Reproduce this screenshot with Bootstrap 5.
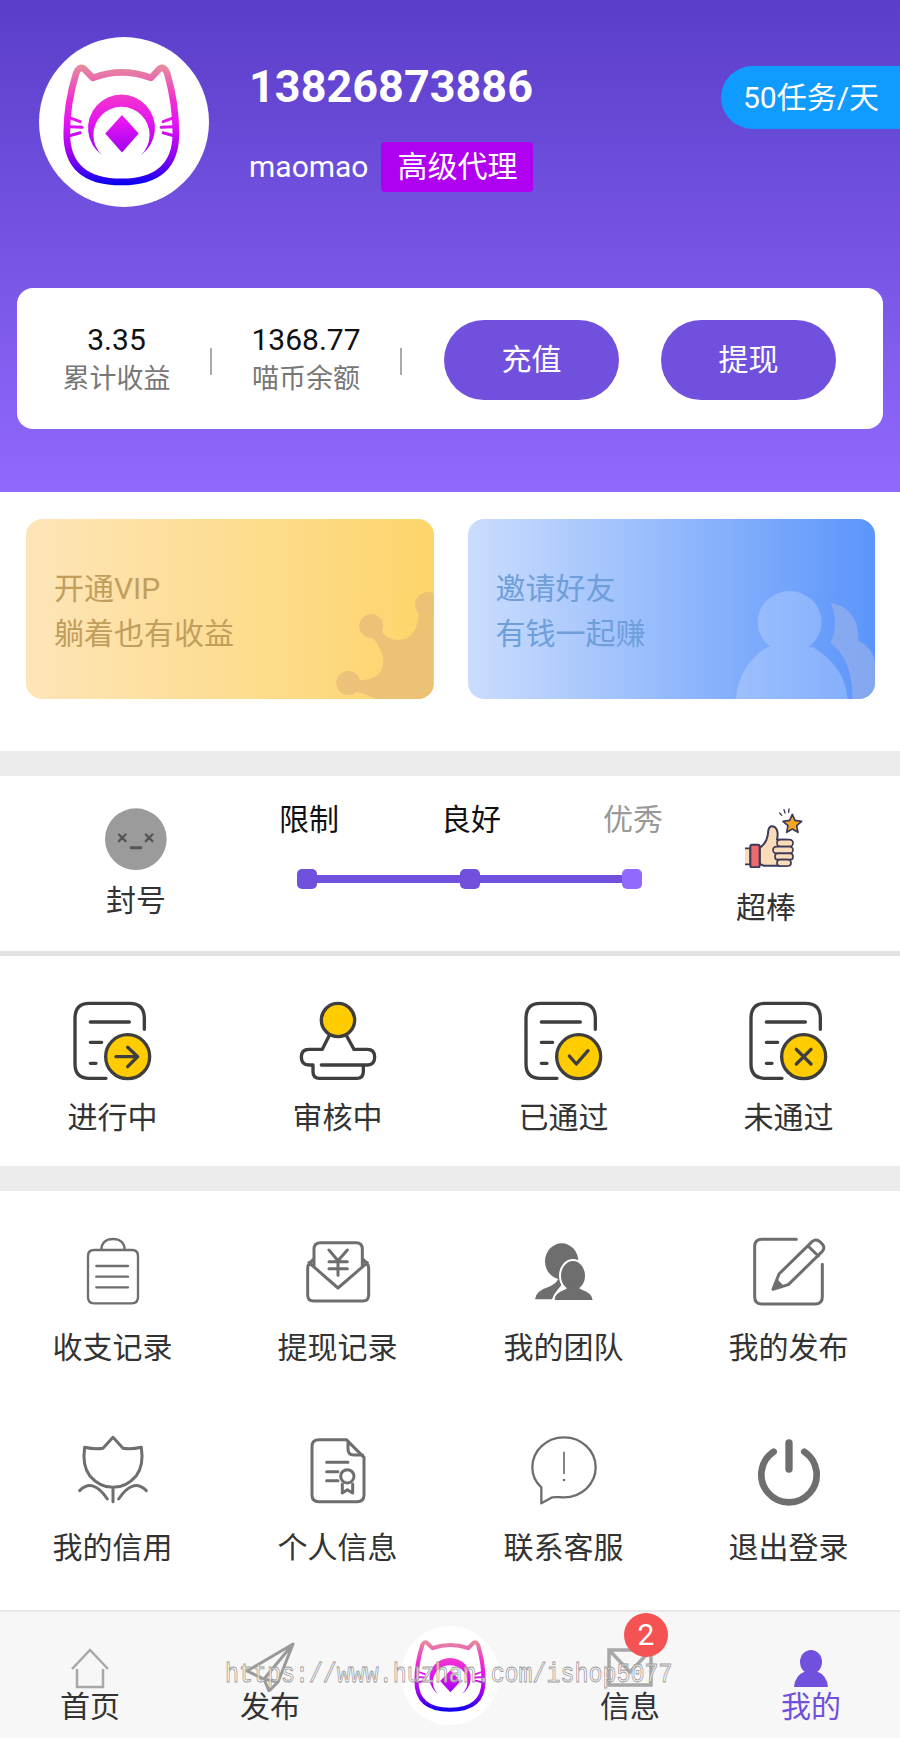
<!DOCTYPE html>
<html lang="zh-CN">

<head>
  <meta charset="UTF-8">
  <meta name="viewport" content="width=device-width, initial-scale=1.0">
  <title>我的</title>
  <link href="https://cdn.jsdelivr.net/npm/bootstrap@5.3.0/dist/css/bootstrap.min.css" rel="stylesheet">
  <style>
    body {
      width: 900px;
      height: 1738px;
      overflow: hidden;
      background: #fff;
      color: #333;
      font-family: Roboto, "Noto Sans CJK SC", sans-serif;
      font-size: 30px;
      line-height: 40px;
    }

    .hero {
      height: 492px;
      padding-top: 37px;
      background: linear-gradient(180deg, #5a3ec9 0%, #9169fd 100%);
    }

    .avatar {
      width: 170px;
      height: 170px;
      margin-left: 39px;
      margin-right: 40px;
      flex: none;
    }

    .phone {
      margin-top: 27px;
      font-size: 45px;
      line-height: 45px;
      font-weight: 700;
      color: #fff;
    }

    .name-row {
      margin-top: 33px;
      color: #fff;
    }

    .level-tag {
      margin-left: 13px;
      height: 50px;
      padding: 0 16px;
      line-height: 50px;
      border-radius: 4px;
      background: #b000f2;
      color: #fff;
    }

    .task-chip {
      margin-top: 29px;
      height: 63px;
      width: 179px;
      padding-left: 22px;
      line-height: 63px;
      border-radius: 32px 0 0 32px;
      background: #0f9bff;
      color: #fff;
    }

    .stats-panel {
      margin: 81px 17px 0;
      height: 141px;
      border-radius: 16px;
      background: #fff;
    }

    .stat-first {
      width: 193px;
      padding-left: 6px;
    }

    .stat-second {
      width: 188px;
    }

    .stat-value {
      color: #111;
    }

    .stat-label {
      font-size: 27px;
      line-height: 38px;
      color: #777;
    }

    .stat-sep {
      width: 2px;
      height: 27px;
      margin-top: 6px;
      background: #aaa;
    }

    .btn-money {
      width: 175px;
      height: 80px;
      margin-top: 2px;
      border: 0;
      border-radius: 40px;
      background: #7050dd;
      color: #fff;
      font-size: 30px;
      line-height: 80px;
      padding: 0;
    }

    .btn-money:first-of-type {
      margin-left: 42px;
      margin-right: 42px;
    }

    .banners {
      height: 259px;
      padding: 27px 25px 0 26px;
      gap: 34px;
    }

    .banner {
      flex: 1;
      height: 180px;
      padding: 47px 0 0 28px;
      border-radius: 16px;
      overflow: hidden;
      line-height: 45px;
    }

    .banner-vip {
      background: linear-gradient(90deg, #fde5b9 0%, #fdd56a 100%);
      color: #c29e5c;
    }

    .banner-invite {
      background: linear-gradient(90deg, #cbddfd 0%, #5b95fb 100%);
      color: #6e9fdb;
    }

    .banner-art {
      top: 0;
      left: 0;
      width: 100%;
      height: 100%;
    }

    .gap-band {
      height: 25px;
      background: #ececec;
    }

    .credit {
      height: 175px;
    }

    .credit-side {
      width: 228px;
      padding: 32px 0 0 44px;
    }

    .credit-side svg {
      display: block;
      margin: 0 auto 11px;
    }

    .credit-end {
      width: 104px;
      padding-top: 32px;
    }

    .credit-end svg {
      display: block;
      margin: 0 0 20px 29px;
    }

    .credit-mid {
      width: 486px;
      padding-top: 24px;
    }

    .credit-mid span {
      width: 162px;
      color: #111;
    }

    .credit-mid span.is-off {
      color: #999;
    }

    .credit-track {
      width: 345px;
      margin: 29px 0 0 69px;
    }

    .track-dot {
      width: 20px;
      height: 20px;
      border-radius: 5px;
      background: #7050dd;
      flex: none;
    }

    .track-dot.is-end {
      background: #9169fd;
    }

    .track-line {
      height: 8px;
      background: #7050dd;
    }

    .thin-band {
      height: 5px;
      background: #e3e3e3;
    }

    .task-row {
      height: 210px;
      padding-top: 45px;
    }

    .task-row .icon-box {
      margin-bottom: 17px;
    }

    .task-row .col-3:nth-child(n+3),
    .tool-grid .col-3:nth-child(4n+3),
    .tool-grid .col-3:nth-child(4n) {
      padding-left: 2px;
    }

    .tool-grid {
      height: 419px;
      padding-top: 40px;
      row-gap: 61px;
    }

    .icon-box {
      display: block;
      width: 80px;
      height: 80px;
      margin: 0 auto 16px;
    }

    .tool-grid .icon-box {
      margin-bottom: 17px;
    }

    .tool-grid .col-3:nth-child(n+5) .icon-box {
      margin-bottom: 19px;
    }

    .tabbar {
      height: 128px;
      background: #f7f7f7;
      border-top: 2px solid #e8e8e8;
    }

    .tab-item {
      width: 180px;
      padding-top: 30px;
      line-height: 30px;
    }

    .tab-item svg {
      display: block;
      margin: 0 auto;
    }

    .tab-item.is-on {
      color: #7050dd;
      padding-left: 2px;
    }

    .tab-logo {
      width: 98px;
      height: 99px;
      margin: 14px auto 0;
      padding: 13px;
      border-radius: 50%;
      background: #fff;
    }

    .msg-count {
      top: 1px;
      left: 84px;
      width: 44px;
      height: 44px;
      line-height: 44px;
      border-radius: 50%;
      background: #f55353;
      color: #fff;
    }

    .site-mark {
      left: 225px;
      top: 1660px;
      font-family: "Liberation Mono", monospace;
      font-size: 23.3px;
      line-height: 30px;
      white-space: nowrap;
      color: rgba(255, 255, 255, 0.7);
      -webkit-text-stroke: 0.7px #999;
      transform: scaleY(1.2);
    }

    .ink-doc {
      fill: none;
      stroke: #3e3e3e;
      stroke-width: 10;
      stroke-linecap: round;
      stroke-linejoin: round;
    }

    .ink-tool {
      fill: none;
      stroke: #6e6e6e;
      stroke-width: 9;
      stroke-linecap: round;
      stroke-linejoin: round;
    }
  </style>
</head>

<body>
  <svg width="0" height="0" class="position-absolute">
    <defs>
      <linearGradient id="catFill" gradientUnits="userSpaceOnUse" x1="0" y1="140" x2="0" y2="490">
        <stop offset="0" stop-color="#e58c9c" />
        <stop offset="0.28" stop-color="#f030d0" />
        <stop offset="0.48" stop-color="#e414f4" />
        <stop offset="0.75" stop-color="#9a00f0" />
        <stop offset="1" stop-color="#0c00f0" />
      </linearGradient>
      <symbol id="catLogo" viewBox="57 52 508 508">
        <path d="M190 146 L218 174 Q305 142 392 174 L418 146 Q432 140 440 160 Q466 250 466 340 Q466 485 303 485 Q140 485 140 340 Q140 250 168 160 Q176 140 190 146 Z" fill="none" stroke="url(#catFill)" stroke-width="20" stroke-linejoin="round" />
        <path d="M148 293 L180 305 M148 320 L186 322 M148 347 L180 338 M460 293 L428 305 M460 320 L422 322 M460 347 L428 338" stroke="url(#catFill)" stroke-width="9" stroke-linecap="round" fill="none" />
        <path d="M245 405 A100 100 0 1 1 362 405 A84 84 0 1 0 245 405 Z" fill="url(#catFill)" />
        <path d="M305 285 L355 340 L305 397 L255 340 Z" fill="url(#catFill)" />
      </symbol>
      <symbol id="docBase" viewBox="36 33 240 240">
        <path class="ink-doc" d="M135 265 H85 Q42 265 42 222 V85 Q42 40 85 40 H205 Q250 40 250 85 V118 M88 96 H205 M88 157 H122 M88 220 H105" />
        <circle class="ink-doc" cx="200" cy="200" r="66" style="fill:#ffcc00" />
      </symbol>
    </defs>
  </svg>

  <div class="hero">
    <div class="d-flex align-items-start">
      <svg class="avatar bg-white rounded-circle"><use href="#catLogo" /></svg>
      <div>
        <div class="phone">13826873886</div>
        <div class="name-row d-flex align-items-center">
          <span>maomao</span>
          <span class="level-tag">高级代理</span>
        </div>
      </div>
      <div class="task-chip ms-auto">50任务/天</div>
    </div>

    <div class="stats-panel d-flex align-items-center">
      <div class="stat-first text-center">
        <div class="stat-value">3.35</div>
        <div class="stat-label">累计收益</div>
      </div>
      <div class="stat-sep"></div>
      <div class="stat-second text-center">
        <div class="stat-value">1368.77</div>
        <div class="stat-label">喵币余额</div>
      </div>
      <div class="stat-sep"></div>
      <button type="button" class="btn btn-money">充值</button>
      <button type="button" class="btn btn-money">提现</button>
    </div>
  </div>

  <div class="banners d-flex">
    <div class="banner banner-vip position-relative">
      <svg class="banner-art position-absolute" viewBox="0 0 407 180">
        <g fill="#e8bd78" opacity="0.8">
          <path d="M407 76 L392 88 Q394 120 372 121 Q358 121 352 106 L338 110 Q354 124 357 140 Q358 160 336 161 L322 164 L328 172 Q340 175 350 180 H407 Z" />
          <circle cx="402" cy="86" r="13" />
          <circle cx="345" cy="107" r="12" />
          <circle cx="322" cy="164" r="12" />
        </g>
      </svg>
      <div class="position-relative">开通VIP<br>躺着也有收益</div>
    </div>
    <div class="banner banner-invite position-relative">
      <svg class="banner-art position-absolute" viewBox="0 0 408 180">
        <path d="M363 84 Q391 88 391 122 Q408 130 408 150 V180 H385 Q385 140 363 124 Q372 105 363 84 Z" fill="#a9b8e6" fill-opacity="0.5" />
        <g fill="#fff" opacity="0.22">
          <ellipse cx="322" cy="103" rx="32" ry="31" />
          <path d="M268 180 Q272 145 300 128 H345 Q378 148 380 180 Z" />
        </g>
      </svg>
      <div class="position-relative">邀请好友<br>有钱一起赚</div>
    </div>
  </div>

  <div class="gap-band"></div>

  <div class="credit d-flex">
    <div class="credit-side text-center">
      <svg width="62" height="62" viewBox="135 52 187 187">
        <circle cx="228" cy="146" r="93" fill="#9b9b9b" />
        <path d="M177 132 L197 152 M197 132 L177 152 M258 132 L278 152 M278 132 L258 152" stroke="#555" stroke-width="7" stroke-linecap="round" />
        <path d="M214 172 H243" stroke="#555" stroke-width="9" stroke-linecap="round" />
      </svg>
      封号
    </div>
    <div class="credit-mid">
      <div class="d-flex text-center">
        <span>限制</span>
        <span>良好</span>
        <span class="is-off">优秀</span>
      </div>
      <div class="credit-track d-flex align-items-center">
        <div class="track-dot"></div>
        <div class="track-line flex-fill"></div>
        <div class="track-dot"></div>
        <div class="track-line flex-fill"></div>
        <div class="track-dot is-end"></div>
      </div>
    </div>
    <div class="credit-end text-center">
      <svg width="60" height="60" viewBox="310 55 180 180">
        <path d="M316 176 H332 V224 H316" fill="#fbdcb8" stroke="#3c3a5c" stroke-width="5" />
        <path d="M360 174 Q384 160 386 122 Q390 104 405 112 Q418 122 412 150 H440 V228 H375 Q368 228 360 222 Z" fill="#fbdcb8" stroke="#3c3a5c" stroke-width="6" stroke-linejoin="round" />
        <rect x="332" y="165" width="28" height="68" rx="5" fill="#ef6a6a" stroke="#3c3a5c" stroke-width="6" />
        <rect x="412" y="150" width="48" height="21" rx="10" fill="#fbdcb8" stroke="#3c3a5c" stroke-width="5" />
        <rect x="400" y="171" width="60" height="20" rx="10" fill="#fbdcb8" stroke="#3c3a5c" stroke-width="5" />
        <rect x="406" y="191" width="54" height="19" rx="9" fill="#fbdcb8" stroke="#3c3a5c" stroke-width="5" />
        <rect x="412" y="210" width="42" height="19" rx="9" fill="#fbdcb8" stroke="#3c3a5c" stroke-width="5" />
        <path d="M458 74 L466 92 L486 95 L471 108 L475 128 L458 118 L441 128 L445 108 L430 95 L450 92 Z" fill="#f5a623" stroke="#3c3a5c" stroke-width="5" stroke-linejoin="round" />
        <path d="M420 70 L426 77 M433 60 L436 70 M448 58 L447 68" stroke="#3c3a5c" stroke-width="4" stroke-linecap="round" />
      </svg>
      超棒
    </div>
  </div>

  <div class="thin-band"></div>

  <div class="task-row row g-0 text-center">
    <div class="col-3">
      <svg class="icon-box" viewBox="36 33 240 240">
        <use href="#docBase" x="36" y="33" width="240" height="240" />
        <path class="ink-doc" d="M165 200 H228 M200 172 L230 200 L200 230" />
      </svg>
      进行中
    </div>
    <div class="col-3">
      <svg class="icon-box" viewBox="712 33 240 240">
        <path class="ink-doc" d="M805 138 L785 178 H745 Q722 178 722 201 Q722 225 745 225 H757 V245 Q757 265 777 265 H888 Q908 265 908 245 V225 H920 Q942 225 942 201 Q942 178 920 178 H880 L858 138 M782 225 H905" />
        <circle class="ink-doc" cx="832" cy="90" r="50" style="fill:#ffcc00" />
      </svg>
      审核中
    </div>
    <div class="col-3">
      <svg class="icon-box" viewBox="36 33 240 240">
        <use href="#docBase" x="36" y="33" width="240" height="240" />
        <path class="ink-doc" d="M172 198 L193 222 L228 182" />
      </svg>
      已通过
    </div>
    <div class="col-3">
      <svg class="icon-box" viewBox="36 33 240 240">
        <use href="#docBase" x="36" y="33" width="240" height="240" />
        <path class="ink-doc" d="M178 178 L222 222 M222 178 L178 222" />
      </svg>
      未通过
    </div>
  </div>

  <div class="gap-band"></div>

  <div class="tool-grid row g-0 text-center align-content-start">
    <div class="col-3">
      <svg class="icon-box" viewBox="35 33 240 240">
        <path class="ink-tool" style="stroke-width:7" d="M120 90 H98 Q80 90 80 108 V232 Q80 250 98 250 H212 Q230 250 230 232 V108 Q230 90 212 90 H190 M120 90 C120 68 135 57 155 57 C175 57 190 68 190 90 Z M105 138 H200 M105 170 H200 M105 202 H200" />
      </svg>
      收支记录
    </div>
    <div class="col-3">
      <svg class="icon-box" viewBox="712 33 240 240">
        <path class="ink-tool" d="M758 118 L746 130 Q741 135 741 146 V225 Q741 243 759 243 H906 Q924 243 924 225 V146 Q924 135 919 130 L907 118 M745 128 L832 204 L920 128 M760 138 V87 Q760 68 780 68 H886 Q905 68 905 87 V138" />
        <path class="ink-tool" d="M805 90 L832 122 L860 90 M832 122 V166 M805 125 H860 M805 146 H860" />
      </svg>
      提现记录
    </div>
    <div class="col-3">
      <svg class="icon-box" viewBox="130 33 240 240">
        <g fill="#6e6e6e">
          <ellipse cx="243" cy="124" rx="50" ry="54" />
          <path d="M163 238 Q165 212 205 200 Q225 193 232 178 L262 172 L232 208 Q218 224 214 238 Z" />
          <path d="M218 238 Q222 218 250 208 L262 198 H292 L305 208 Q335 218 338 238 Z" stroke="#fff" stroke-width="5" />
          <ellipse cx="277" cy="167" rx="39" ry="47" stroke="#fff" stroke-width="6" />
          <path d="M222 240 Q226 220 252 210 L264 200 H290 L303 210 Q331 220 336 240 Z" />
        </g>
      </svg>
      我的团队
    </div>
    <div class="col-3">
      <svg class="icon-box" viewBox="808 33 240 240">
        <path class="ink-tool" d="M950 58 H847 Q825 58 825 80 V230 Q825 252 847 252 H1006 Q1028 252 1028 230 V133" />
        <path class="ink-tool" d="M880 208 L898 162 L998 64 Q1010 55 1022 66 L1030 75 Q1036 85 1028 94 L926 194 Z M985 78 L1016 108" />
        <path d="M880 208 L893 178 L912 197 Z" fill="#6e6e6e" />
      </svg>
      我的发布
    </div>
    <div class="col-3">
      <svg class="icon-box" viewBox="35 30 240 240">
        <path class="ink-tool" d="M70 85 Q100 92 125 88 L155 55 L185 88 Q210 92 240 85 Q248 140 225 170 Q195 205 155 205 Q115 205 85 170 Q62 140 70 85 Z M155 205 V248 M55 215 Q95 175 138 240 M255 215 Q215 175 172 240" />
      </svg>
      我的信用
    </div>
    <div class="col-3">
      <svg class="icon-box" viewBox="712 30 240 240">
        <path class="ink-tool" d="M775 62 H857 L910 115 V228 Q910 248 890 248 H774 Q754 248 754 228 V82 Q754 62 775 62 Z M862 66 V90 Q862 108 880 108 H906 M798 130 H862 M798 158 H832 M798 185 H832 M845 195 V222 L860 212 L876 222 V195" />
        <circle class="ink-tool" cx="860" cy="172" r="20" />
      </svg>
      个人信息
    </div>
    <div class="col-3">
      <svg class="icon-box" viewBox="130 30 240 240">
        <path class="ink-tool" style="stroke-width:7" d="M182 205 C165 190 155 170 155 145 C155 95 197 55 250 55 C303 55 345 95 345 145 C345 195 303 235 250 235 C235 235 225 233 215 235 L182 253 Z" />
        <path d="M250 98 V165" stroke="#6e6e6e" stroke-width="5" />
        <circle cx="250" cy="183" r="4" fill="#6e6e6e" />
      </svg>
      联系客服
    </div>
    <div class="col-3">
      <svg class="icon-box" viewBox="808 30 240 240">
        <path d="M882 98 A83 83 0 1 0 974 98" fill="none" stroke="#6e6e6e" stroke-width="20" stroke-linecap="round" />
        <path d="M928 72 V150" stroke="#6e6e6e" stroke-width="22" stroke-linecap="round" />
      </svg>
      退出登录
    </div>
  </div>

  <div class="tabbar d-flex text-center">
    <div class="tab-item">
      <svg width="50" height="50" viewBox="0 0 50 50">
        <path d="M7 27 L25 8 L43 27 M12 27 V45 H38 V27" fill="none" stroke="#a8a8a8" stroke-width="2.5" />
      </svg>
      首页
    </div>
    <div class="tab-item">
      <svg width="50" height="50" viewBox="0 0 50 50">
        <path d="M48 2 L2 29 L19 37 Z M48 2 L19 37 L24 49 L33 40 L19 37 M48 2 L33 40" fill="none" stroke="#999" stroke-width="3" stroke-linejoin="round" />
      </svg>
      发布
    </div>
    <div class="tab-item p-0">
      <div class="tab-logo">
        <svg width="72" height="73" viewBox="128 128 350 368" preserveAspectRatio="none"><use href="#catLogo" x="57" y="52" width="508" height="508" /></svg>
      </div>
    </div>
    <div class="tab-item position-relative">
      <svg width="50" height="50" viewBox="0 0 50 50">
        <path d="M4 8 H46 V43 H4 Z M4 8 L25 30 L46 8" fill="none" stroke="#a8a8a8" stroke-width="3.5" />
      </svg>
      信息
      <span class="msg-count position-absolute">2</span>
    </div>
    <div class="tab-item is-on">
      <svg width="50" height="50" viewBox="0 0 50 50">
        <ellipse cx="25" cy="20" rx="11" ry="12" fill="#7050dd" />
        <path d="M8 45 Q9 33 20 29 H30 Q41 33 42 45 Z" fill="#7050dd" />
      </svg>
      我的
    </div>
  </div>

  <div class="site-mark position-absolute">https://www.huzhan.com/ishop5077</div>

  <script src="https://cdn.jsdelivr.net/npm/bootstrap@5.3.0/dist/js/bootstrap.bundle.min.js"></script>
</body>

</html>
